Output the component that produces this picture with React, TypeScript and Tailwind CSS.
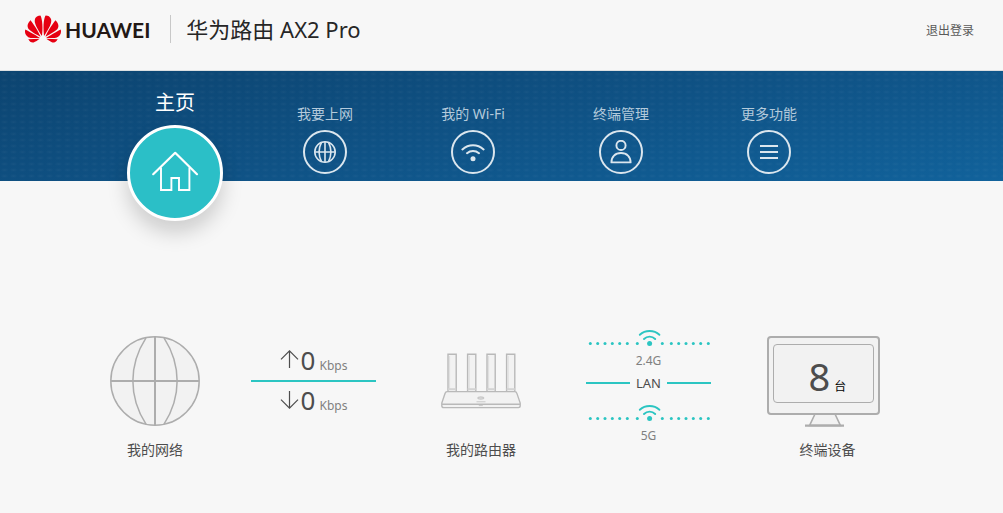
import type { ReactNode } from "react";
import { SiHuawei } from "react-icons/si";

function GlobeSmall() {
  return (
    <svg className="size-6" viewBox="0 0 24 24" fill="none" stroke="currentColor" strokeWidth="1.6" aria-hidden="true">
      <circle cx="12" cy="12" r="10.2" />
      <path d="M12 1.6v20.8M1.6 12h20.8M8.6 2.2c-3.2 6.2-3.2 13.4 0 19.6M15.4 2.2c3.2 6.2 3.2 13.4 0 19.6" />
    </svg>
  );
}

function WifiSmall() {
  return (
    <svg className="size-6" viewBox="0 0 24 24" fill="none" stroke="currentColor" strokeWidth="2" strokeLinecap="round" aria-hidden="true">
      <path d="M1.4 9.4C7.6 3.9 16.4 3.9 22.6 9.4M6 13.2C9.5 10.2 14.5 10.2 18 13.2" />
      <circle cx="12" cy="18.8" r="2.5" fill="currentColor" stroke="none" />
    </svg>
  );
}

function PersonSmall() {
  return (
    <svg className="size-6" viewBox="0 0 24 24" fill="none" stroke="currentColor" strokeWidth="1.9" aria-hidden="true">
      <circle cx="12" cy="5.4" r="4.6" />
      <path d="M2.4 22.4C2.4 16.8 6.2 13 12 13S21.6 16.8 21.6 22.4Z" strokeLinejoin="round" />
    </svg>
  );
}

function MenuSmall() {
  return (
    <svg className="size-6" viewBox="0 0 24 24" fill="none" stroke="currentColor" strokeWidth="1.9" aria-hidden="true">
      <path d="M3 6h18M3 12h18M3 18h18" />
    </svg>
  );
}

function House() {
  return (
    <svg className="h-11 w-12" viewBox="0 0 48 44" fill="none" stroke="currentColor" strokeWidth="1.9" aria-hidden="true">
      <path d="M2.2 23.2 24.2 1.8 46 23.2" strokeLinecap="round" strokeLinejoin="round" strokeWidth="2.2" />
      <path d="M10 16.4V39H20.4V27H28V39H38.4V16.4" />
    </svg>
  );
}

function NavItem({ label, icon }: { label: string; icon: ReactNode }) {
  return (
    <li className="w-[148px]">
      <a href="#" className="flex flex-col items-center pt-8 text-[#b4cadb]">
        <span className="text-sm leading-[22px]">{label}</span>
        <span className="mt-[5px] flex size-11 items-center justify-center rounded-full border-2 border-[#dbe6ee] text-[#dbe6ee]">
          {icon}
        </span>
      </a>
    </li>
  );
}

function NetworkGlobe() {
  return (
    <svg className="h-[92px] w-[92px]" viewBox="0 0 92 92" fill="none" stroke="#adadad" strokeWidth="1.5" aria-hidden="true">
      <circle cx="46" cy="46" r="44.2" fill="#f2f2f2" />
      <path d="M37 2.8C19.5 30 19.5 62 37 89.2M55 2.8C72.5 30 72.5 62 55 89.2" />
      <path d="M46 2v88M2 46h88" strokeWidth="2" />
    </svg>
  );
}

function Router() {
  const antennas = [7, 26.6, 46, 65.6];
  return (
    <svg className="h-14 w-20" viewBox="0 0 80 56" fill="#f2f2f2" stroke="#b9b9b9" strokeWidth="1.4" aria-hidden="true">
      {antennas.map((x) => (
        <g key={x}>
          <path d={`M${x} 38.5V1.2h8.2V38.5`} />
          <path d={`M${x + 1.6} 3v33`} stroke="#dedede" strokeWidth="1" />
          <path d={`M${x} 36.2h8.2`} stroke="#d4d4d4" strokeWidth="2" />
        </g>
      ))}
      <path d="M6 38.6H74C75.2 38.6 75.6 39.4 76 40.6L79.2 50V52.8Q79.2 54.6 77.4 54.6H2.6Q.8 54.6 .8 52.8V50L4 40.6C4.4 39.4 4.8 38.6 6 38.6Z" />
      <path d="M1 51.2H79" />
      <ellipse cx="39.8" cy="45" rx="2.8" ry="1" stroke="#c8c8c8" />
      <path d="M35.5 48.8h9M37.8 52.6h4" strokeWidth="1" stroke="#c8c8c8" />
    </svg>
  );
}

function Monitor() {
  return (
    <svg className="h-[92px] w-[121px]" viewBox="0 0 121 92" fill="#f2f2f2" stroke="#adadad" strokeWidth="2" aria-hidden="true">
      <path d="M48 79 42.6 90.4H73.4L68 79" strokeWidth="1.6" />
      <rect x="1" y="2" width="111" height="77" rx="3" />
      <rect x="6.5" y="9.5" width="100" height="58" rx="3.5" strokeWidth="1" />
      <path d="M38 90.6h39" strokeWidth="2.4" />
    </svg>
  );
}

function WirelessLink() {
  const dots = [4.3, 11.7, 19, 26.3, 33.7, 41.3, 51.3, 76.3, 85.3, 92.7, 100, 107.3, 114.7, 122.3];
  return (
    <svg className="h-[17px] w-full" viewBox="0 0 125 17" fill="#2bc5c2" aria-hidden="true">
      {dots.map((x) => (
        <circle key={x} cx={x} cy="14.4" r="1.5" />
      ))}
      <circle cx="63.6" cy="14.4" r="2.5" />
      <path
        d="M53.8 5.8C59.2.8 68 .8 73.4 5.8M58 10C61.2 6.8 66 6.8 69.2 10"
        fill="none"
        stroke="#2bc5c2"
        strokeWidth="1.9"
        strokeLinecap="round"
      />
    </svg>
  );
}

function Arrow({ down = false }: { down?: boolean }) {
  return (
    <svg className="size-[19px]" viewBox="0 0 19 19" fill="none" stroke="#4d4d4d" strokeWidth="1.2" aria-hidden="true">
      <path d={down ? "M9.5 1v17M1 9.6l8.5 8.5L18 9.6" : "M9.5 18V1M1 9.4 9.5.9 18 9.4"} />
    </svg>
  );
}

function Rate({ value, down = false }: { value: number; down?: boolean }) {
  return (
    <div className="flex h-[38px] items-center justify-center pb-[3px]">
      <Arrow down={down} />
      <p className="ml-0.5 text-[26px] leading-9 text-[#4d4d4d]">
        {value}
        <span className="ml-1 text-xs text-[#808080]">Kbps</span>
      </p>
    </div>
  );
}

function DeviceNode({ label, children }: { label: string; children: ReactNode }) {
  return (
    <div className="flex flex-col items-center pt-2">
      <div className="flex h-[92px] items-center justify-center">{children}</div>
      <h2 className="mt-3 text-sm leading-[22px] text-[#4d4d4d]">{label}</h2>
    </div>
  );
}

export default function App() {
  return (
    <div className="min-h-screen bg-[#f7f7f7] font-['Noto_Sans','Noto_Sans_CJK_SC',sans-serif]">
      <header className="flex h-[71px] items-start justify-between border-b border-[#dcdfe1] pr-[29px] pl-[25px]">
        <div className="flex items-center pt-2.5">
          <SiHuawei className="size-9 text-[#e60012]" aria-hidden="true" />
          <span className="ml-1 pt-0.5 font-['Lato',sans-serif] text-[21px] leading-9 font-bold text-[#231815]">HUAWEI</span>
          <h1 className="ml-5 border-l border-[#c8c8c8] pl-[15px] text-[22px] leading-7 text-[#262626]">华为路由 AX2 Pro</h1>
        </div>
        <a href="#" className="pt-5 text-xs leading-[22px] text-[#595959]">
          退出登录
        </a>
      </header>

      <nav className="h-[110px] bg-[radial-gradient(ellipse_4px_2px_at_center,rgba(255,255,255,0.04),transparent),linear-gradient(170deg,#0c4470_0%,#0f5285_50%,#11629b_100%)] bg-size-[9px_6px,100%_100%]">
        <ul className="mx-auto flex max-w-[801px]">
          <li className="w-[150px] pr-0.5">
            <a href="#" aria-current="page" className="flex flex-col items-center pt-[18px] text-white">
              <span className="text-xl leading-7">主页</span>
              <span className="mt-2 flex size-24 items-center justify-center rounded-full border-[3px] border-white bg-[#2bbfc7] shadow-[0_12px_20px_rgba(0,0,0,0.17)]">
                <House />
              </span>
            </a>
          </li>
          <NavItem label="我要上网" icon={<GlobeSmall />} />
          <NavItem label="我的 Wi-Fi" icon={<WifiSmall />} />
          <NavItem label="终端管理" icon={<PersonSmall />} />
          <NavItem label="更多功能" icon={<MenuSmall />} />
        </ul>
      </nav>

      <main className="mx-auto flex max-w-[801px] items-start justify-between px-1 pt-[146px]">
        <section className="w-[100px]">
          <DeviceNode label="我的网络">
            <NetworkGlobe />
          </DeviceNode>
        </section>

        <section className="w-[125px] pt-[15px]" aria-label="网络速率">
          <Rate value={0} />
          <hr className="border-t-2 border-[#2bc5c2]" />
          <Rate value={0} down />
        </section>

        <section className="w-[118px]">
          <DeviceNode label="我的路由器">
            <Router />
          </DeviceNode>
        </section>

        <section className="w-[125px] pt-0.5 text-center text-xs leading-[22px] text-[#808080]">
          <WirelessLink />
          <p className="mt-1">2.4G</p>
          <div className="flex items-center gap-1.5">
            <span className="h-0.5 flex-1 bg-[#2bc5c2]" />
            <span className="text-[13px] text-[#4d4d4d]">LAN</span>
            <span className="h-0.5 flex-1 bg-[#2bc5c2]" />
          </div>
          <div className="pt-2.5">
            <WirelessLink />
          </div>
          <p className="mt-1">5G</p>
        </section>

        <section className="w-[141px]">
          <DeviceNode label="终端设备">
            <div className="relative">
              <Monitor />
              <p className="absolute inset-x-0 top-3.5 text-center text-[38px] leading-[54px] text-[#4d4d4d]">
                8<span className="ml-1 text-xs text-black">台</span>
              </p>
            </div>
          </DeviceNode>
        </section>
      </main>
    </div>
  );
}
